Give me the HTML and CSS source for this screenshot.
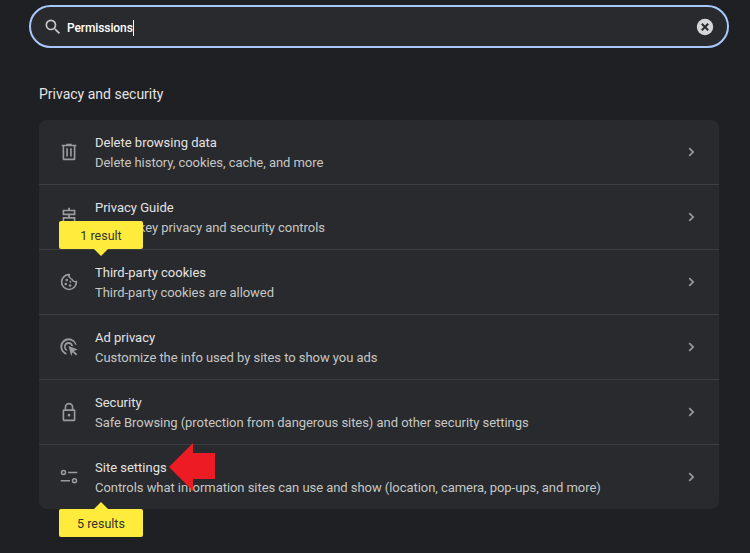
FILE: index.html
```html
<!DOCTYPE html>
<html lang="en">
<head>
    <meta charset="UTF-8">
    <title>Settings - Privacy and security</title>
    <link rel="stylesheet" href="styles.css">
</head>
<body>
    <div class="search">
        <svg class="search-icon" viewBox="0 0 24 24"><path d="M15.5 14h-.79l-.28-.27A6.47 6.47 0 0 0 16 9.5 6.5 6.5 0 1 0 9.5 16c1.61 0 3.09-.59 4.23-1.57l.27.28v.79l5 4.99L20.49 19l-4.99-5zm-6 0C7.01 14 5 11.99 5 9.5S7.01 5 9.5 5 14 7.01 14 9.5 11.99 14 9.5 14z"/></svg>
        <span class="search-text">Permissions</span>
        <span class="caret"></span>
        <svg class="clear-icon" viewBox="0 0 20 20">
            <circle cx="10" cy="10" r="8.2" fill="#d5d6d7"/>
            <path d="M6.8 6.8l6.4 6.4M13.2 6.8l-6.4 6.4" stroke="#2a2b2e" stroke-width="2" fill="none"/>
        </svg>
    </div>

    <h2 class="section-title">Privacy and security</h2>

    <div class="card">
        <div class="row">
            <svg class="row-icon" viewBox="0 0 24 24"><path d="M9 3v1H4v1.800h1V19.500A1.500 1.500 0 0 0 6.500 21h11a1.500 1.500 0 0 0 1.500-1.500V5.800h1V4h-5V3H9zM6.800 5.800h10.400v13.400H6.800V5.800zM9 8v9h1.800V8H9zm4.200 0v9H15V8h-1.800z"/></svg>
            <div class="row-text">
                <div class="row-title">Delete browsing data</div>
                <div class="row-sub">Delete history, cookies, cache, and more</div>
            </div>
            <svg class="chevron" viewBox="0 0 24 24"><path d="M9.4 6.6L8 8l4 4-4 4 1.4 1.4L14.8 12z"/></svg>
        </div>
        <div class="row">
            <svg class="row-icon" viewBox="0 0 24 24"><path d="M11 2h2v2h6v6h-6v2h6v7h-6v3h-2v-3H5v-7h6v-2H5V4h6V2zM6.800 5.800v2.400h10.400V5.800H6.800zm0 8v3.400h10.400v-3.400H6.800z"/></svg>
            <div class="row-text">
                <div class="row-title">Privacy Guide</div>
                <div class="row-sub">Review key privacy and security controls</div>
            </div>
            <svg class="chevron" viewBox="0 0 24 24"><path d="M9.4 6.6L8 8l4 4-4 4 1.4 1.4L14.8 12z"/></svg>
        </div>
        <div class="row">
            <svg class="row-icon" viewBox="0 0 24 24">
                <path d="M12 3a9 9 0 1 0 9 9c0-.6 0-1.100-.2-1.700-.6.500-1.300.7-2.100.6-1.400-.2-2.400-1.200-2.700-2.500-1.600-.1-2.900-1.300-3.100-2.900-.1-.8.1-1.500.5-2.300C13 3.100 12.500 3 12 3zM10.600 5c.5 2 1.900 3.500 3.800 4.200.6 1.500 1.900 2.700 3.600 3.100.4.100.8.200 1.200.100A7.200 7.200 0 1 1 10.600 5z"/>
                <circle cx="9.500" cy="9.800" r="1.400"/><circle cx="8.500" cy="14.200" r="1.400"/><circle cx="13.200" cy="15.800" r="1.400"/><circle cx="13.500" cy="11.700" r="1"/>
            </svg>
            <div class="row-text">
                <div class="row-title">Third-party cookies</div>
                <div class="row-sub">Third-party cookies are allowed</div>
            </div>
            <svg class="chevron" viewBox="0 0 24 24"><path d="M9.4 6.6L8 8l4 4-4 4 1.4 1.4L14.8 12z"/></svg>
        </div>
        <div class="row">
            <svg class="row-icon" viewBox="0 0 24 24">
                <path d="M11.500 2.500a9 9 0 0 0-1.900 17.800l-.4-1.800A7.200 7.200 0 1 1 18.600 9.300l1.800.4A9 9 0 0 0 11.500 2.500z"/>
                <path d="M11.500 6.500a5 5 0 0 0-1.300 9.800l-.5-1.800a3.200 3.200 0 1 1 4.800-3.700l1.800.5a5 5 0 0 0-4.800-4.800z"/>
                <path d="M11.500 11l10 3.800-4.200 1.500 3.700 3.700-1.400 1.400-3.700-3.700-1.500 4.200z"/>
            </svg>
            <div class="row-text">
                <div class="row-title">Ad privacy</div>
                <div class="row-sub">Customize the info used by sites to show you ads</div>
            </div>
            <svg class="chevron" viewBox="0 0 24 24"><path d="M9.4 6.6L8 8l4 4-4 4 1.4 1.4L14.8 12z"/></svg>
        </div>
        <div class="row">
            <svg class="row-icon" viewBox="0 0 24 24"><path d="M12 2a4.800 4.800 0 0 0-4.800 4.800V9H6.500A1.500 1.500 0 0 0 5 10.500v10A1.500 1.500 0 0 0 6.500 22h11a1.500 1.500 0 0 0 1.500-1.500v-10A1.500 1.500 0 0 0 17.500 9h-.7V6.800A4.800 4.800 0 0 0 12 2zM9 6.800a3 3 0 0 1 6 0V9H9V6.800zM6.800 10.800h10.400v9.400H6.800v-9.400zM12 14a1.500 1.500 0 1 0 0 3 1.500 1.500 0 0 0 0-3z"/></svg>
            <div class="row-text">
                <div class="row-title">Security</div>
                <div class="row-sub">Safe Browsing (protection from dangerous sites) and other security settings</div>
            </div>
            <svg class="chevron" viewBox="0 0 24 24"><path d="M9.400 6.600L8 8l4 4-4 4 1.400 1.400L14.800 12z"/></svg>
        </div>
        <div class="row">
            <svg class="row-icon" viewBox="0 0 24 24">
                <path d="M11 6.200h10V8H11zM3 15.200h10V17H3z"/>
                <path d="M6 4a3 3 0 1 0 0 6 3 3 0 0 0 0-6zm0 1.700a1.300 1.300 0 1 1 0 2.600 1.300 1.300 0 0 1 0-2.600zM18 13a3 3 0 1 0 0 6 3 3 0 0 0 0-6zm0 1.700a1.300 1.300 0 1 1 0 2.600 1.300 1.300 0 0 1 0-2.600z"/>
            </svg>
            <div class="row-text">
                <div class="row-title">Site settings</div>
                <div class="row-sub">Controls what information sites can use and show (location, camera, pop-ups, and more)</div>
            </div>
            <svg class="chevron" viewBox="0 0 24 24"><path d="M9.400 6.600L8 8l4 4-4 4 1.400 1.400L14.800 12z"/></svg>
        </div>
    </div>

    <!-- annotations on top of the screenshot -->
    <div class="bubble bubble-down">1 result</div>
    <div class="bubble bubble-up">5 results</div>
    <svg class="red-arrow" viewBox="0 0 47 48"><path d="M0 24L24 0V10H46V36H24V48z"/></svg>
</body>
</html>
```

FILE: styles.css
```css
html, body {
    height: 100%;
}

body {
    margin: 0;
    padding: 5px 21px 0 29px;
    background: #1f2023;
    color: #e3e3e3;
    font-family: Roboto, "Noto Sans", sans-serif;
    font-size: 13px;
    overflow: hidden;
    position: relative;
    box-sizing: border-box;
}

.search {
    display: flex;
    align-items: center;
    height: 43px;
    box-sizing: border-box;
    padding: 0 12px 0 12px;
    background: #292a2d;
    border: 2px solid #a8c7fa;
    border-radius: 22px;
}

.search-icon {
    width: 20px;
    height: 20px;
    fill: #c7c7c7;
    margin-right: 4px;
}

.search-text {
    color: #fff;
    font-size: 12px;
    font-weight: 500;
    padding-top: 2px;
    letter-spacing: -0.1px;
}

.caret {
    width: 1px;
    height: 16px;
    margin-top: 2px;
    background: #fff;
}

.clear-icon {
    width: 20px;
    height: 20px;
    margin-left: auto;
}

.section-title {
    margin: 36px 0 0 10px;
    height: 36px;
    font-size: 14px;
    font-weight: 400;
    line-height: 20px;
    color: #e3e3e3;
}

.card {
    width: 680px;
    margin-left: 10px;
    background: #292a2d;
    border-radius: 8px;
}

.row {
    display: flex;
    align-items: center;
    height: 65px;
    box-sizing: border-box;
    border-top: 1px solid #3d3e41;
    padding: 0 17px 0 19px;
}

.row:first-child {
    height: 64px;
    border-top: 0;
}

.row-icon {
    width: 22px;
    height: 22px;
    fill: #9a9b9d;
    flex: none;
    margin-right: 15px;
}

.row-text {
    flex: 1;
    padding-top: 2px;
}

.row-title {
    line-height: 20px;
    color: #e3e3e3;
}

.row-sub {
    line-height: 20px;
    color: #c4c7c5;
    letter-spacing: -0.05px;
}

.chevron {
    width: 20px;
    height: 20px;
    fill: #9a9b9d;
    flex: none;
}

.bubble {
    position: absolute;
    left: 59px;
    width: 84px;
    height: 28px;
    background: #ffeb3b;
    color: #333;
    border-radius: 2px;
    font-size: 12.5px;
    line-height: 30px;
    text-align: center;
}

.bubble::after {
    content: "";
    position: absolute;
    left: 35px;
    border-left: 7px solid transparent;
    border-right: 7px solid transparent;
}

.bubble-down {
    top: 221px;
}

.bubble-down::after {
    top: 28px;
    border-top: 7px solid #ffeb3b;
}

.bubble-up {
    top: 509px;
}

.bubble-up::after {
    top: -7px;
    border-bottom: 7px solid #ffeb3b;
}

.red-arrow {
    position: absolute;
    left: 169px;
    top: 443px;
    width: 47px;
    height: 48px;
    fill: #ed1c24;
}
```
